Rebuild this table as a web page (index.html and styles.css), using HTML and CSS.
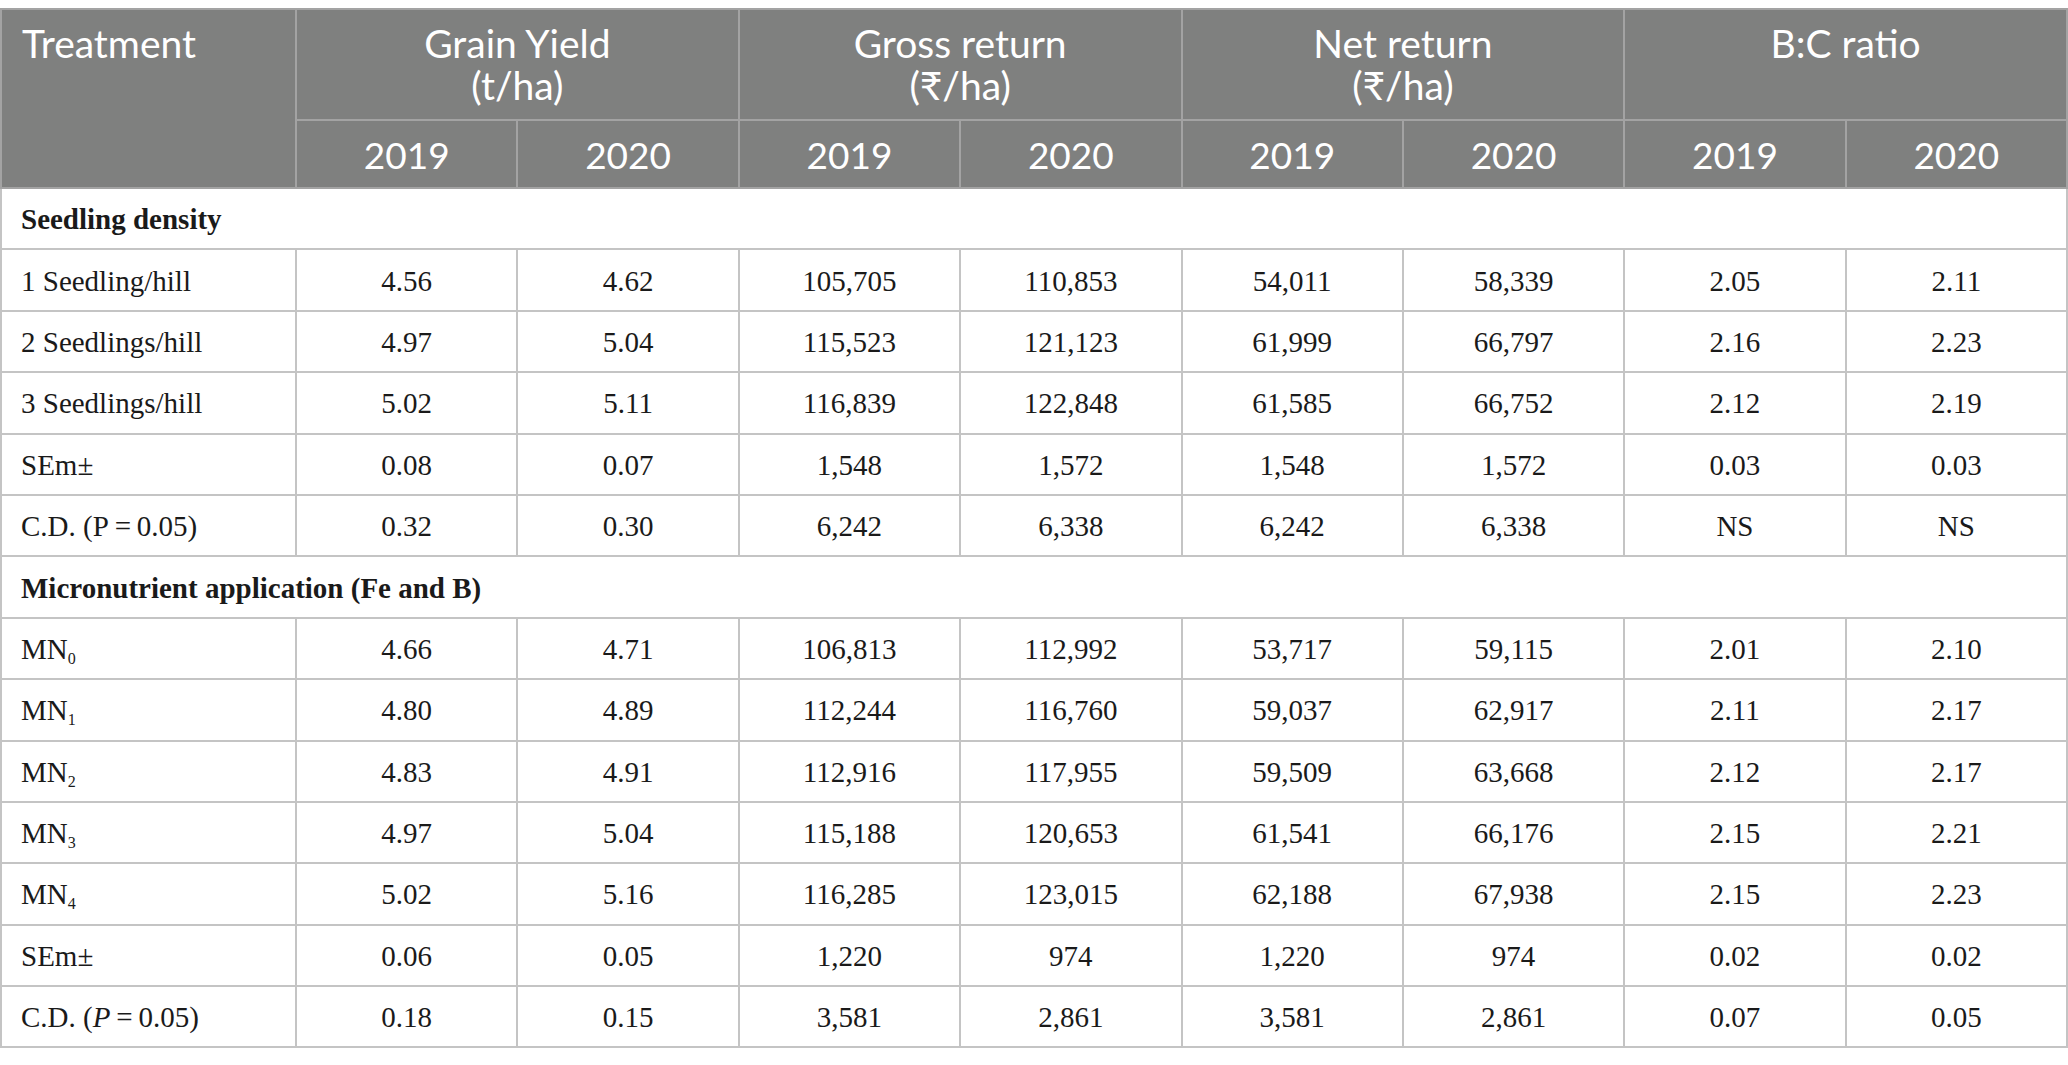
FILE: index.html
```html
<!DOCTYPE html>
<html lang="en">
<head>
  <meta charset="UTF-8">
  <title>Yield and economics table</title>
  <link rel="stylesheet" href="styles.css">
</head>
<body>
  <table class="data-table">
    <colgroup>
      <col class="col-treatment">
      <col span="8" class="col-value">
    </colgroup>
    <thead>
      <tr class="head-top">
        <th rowspan="2" class="head-left">Treatment</th>
        <th colspan="2">Grain Yield<br>(t/ha)</th>
        <th colspan="2">Gross return<br>(₹/ha)</th>
        <th colspan="2">Net return<br>(₹/ha)</th>
        <th colspan="2">B:C ratio</th>
      </tr>
      <tr class="head-years">
        <th>2019</th><th>2020</th>
        <th>2019</th><th>2020</th>
        <th>2019</th><th>2020</th>
        <th>2019</th><th>2020</th>
      </tr>
    </thead>
    <tbody>
      <tr class="section"><td colspan="9">Seedling density</td></tr>
      <tr><td>1 Seedling/hill</td><td>4.56</td><td>4.62</td><td>105,705</td><td>110,853</td><td>54,011</td><td>58,339</td><td>2.05</td><td>2.11</td></tr>
      <tr><td>2 Seedlings/hill</td><td>4.97</td><td>5.04</td><td>115,523</td><td>121,123</td><td>61,999</td><td>66,797</td><td>2.16</td><td>2.23</td></tr>
      <tr><td>3 Seedlings/hill</td><td>5.02</td><td>5.11</td><td>116,839</td><td>122,848</td><td>61,585</td><td>66,752</td><td>2.12</td><td>2.19</td></tr>
      <tr><td>SEm±</td><td>0.08</td><td>0.07</td><td>1,548</td><td>1,572</td><td>1,548</td><td>1,572</td><td>0.03</td><td>0.03</td></tr>
      <tr><td>C.D. (P&#8201;=&#8201;0.05)</td><td>0.32</td><td>0.30</td><td>6,242</td><td>6,338</td><td>6,242</td><td>6,338</td><td>NS</td><td>NS</td></tr>
      <tr class="section"><td colspan="9">Micronutrient application (Fe and B)</td></tr>
      <tr><td>MN<sub>0</sub></td><td>4.66</td><td>4.71</td><td>106,813</td><td>112,992</td><td>53,717</td><td>59,115</td><td>2.01</td><td>2.10</td></tr>
      <tr><td>MN<sub>1</sub></td><td>4.80</td><td>4.89</td><td>112,244</td><td>116,760</td><td>59,037</td><td>62,917</td><td>2.11</td><td>2.17</td></tr>
      <tr><td>MN<sub>2</sub></td><td>4.83</td><td>4.91</td><td>112,916</td><td>117,955</td><td>59,509</td><td>63,668</td><td>2.12</td><td>2.17</td></tr>
      <tr><td>MN<sub>3</sub></td><td>4.97</td><td>5.04</td><td>115,188</td><td>120,653</td><td>61,541</td><td>66,176</td><td>2.15</td><td>2.21</td></tr>
      <tr><td>MN<sub>4</sub></td><td>5.02</td><td>5.16</td><td>116,285</td><td>123,015</td><td>62,188</td><td>67,938</td><td>2.15</td><td>2.23</td></tr>
      <tr><td>SEm±</td><td>0.06</td><td>0.05</td><td>1,220</td><td>974</td><td>1,220</td><td>974</td><td>0.02</td><td>0.02</td></tr>
      <tr><td>C.D. (<i>P</i>&#8201;=&#8201;0.05)</td><td>0.18</td><td>0.15</td><td>3,581</td><td>2,861</td><td>3,581</td><td>2,861</td><td>0.07</td><td>0.05</td></tr>
    </tbody>
  </table>
</body>
</html>
```
FILE: styles.css
```css
* {
  margin: 0;
  padding: 0;
  box-sizing: border-box;
}

body {
  background: #fff;
  padding-top: 8px;
}

.data-table {
  width: 2068px;
  border-collapse: collapse;
  table-layout: fixed;
  border: 2px solid #c4c4c4;
  font-family: 'Liberation Serif', 'Times New Roman', serif;
  font-size: 29px;
  color: #1a1a1a;
}

.col-treatment {
  width: 295px;
}

.data-table thead th {
  background: #7f807f;
  color: #fff;
  font-family: 'Lato', 'Noto Sans', sans-serif;
  font-weight: 400;
  border: 2px solid #a3a3a3;
  text-align: center;
}

.head-top th {
  height: 111px;
  vertical-align: top;
  padding-top: 12px;
  font-family: 'Open Sans', 'Noto Sans', sans-serif;
  font-weight: 500;
  font-size: 39px;
  line-height: 42px;
}

.head-top th.head-left {
  text-align: left;
  padding-left: 20px;
}

.head-years th {
  height: 68px;
  font-size: 37px;
  vertical-align: middle;
}

.data-table tbody td {
  height: 61.4px;
  border: 2px solid #c4c4c4;
  text-align: center;
  vertical-align: middle;
  padding-top: 2px;
}

.data-table tbody td:first-child {
  text-align: left;
  padding-left: 19px;
}

.section td {
  font-weight: 700;
}

sub {
  font-size: 16px;
  vertical-align: -5px;
  line-height: 0;
}
```
